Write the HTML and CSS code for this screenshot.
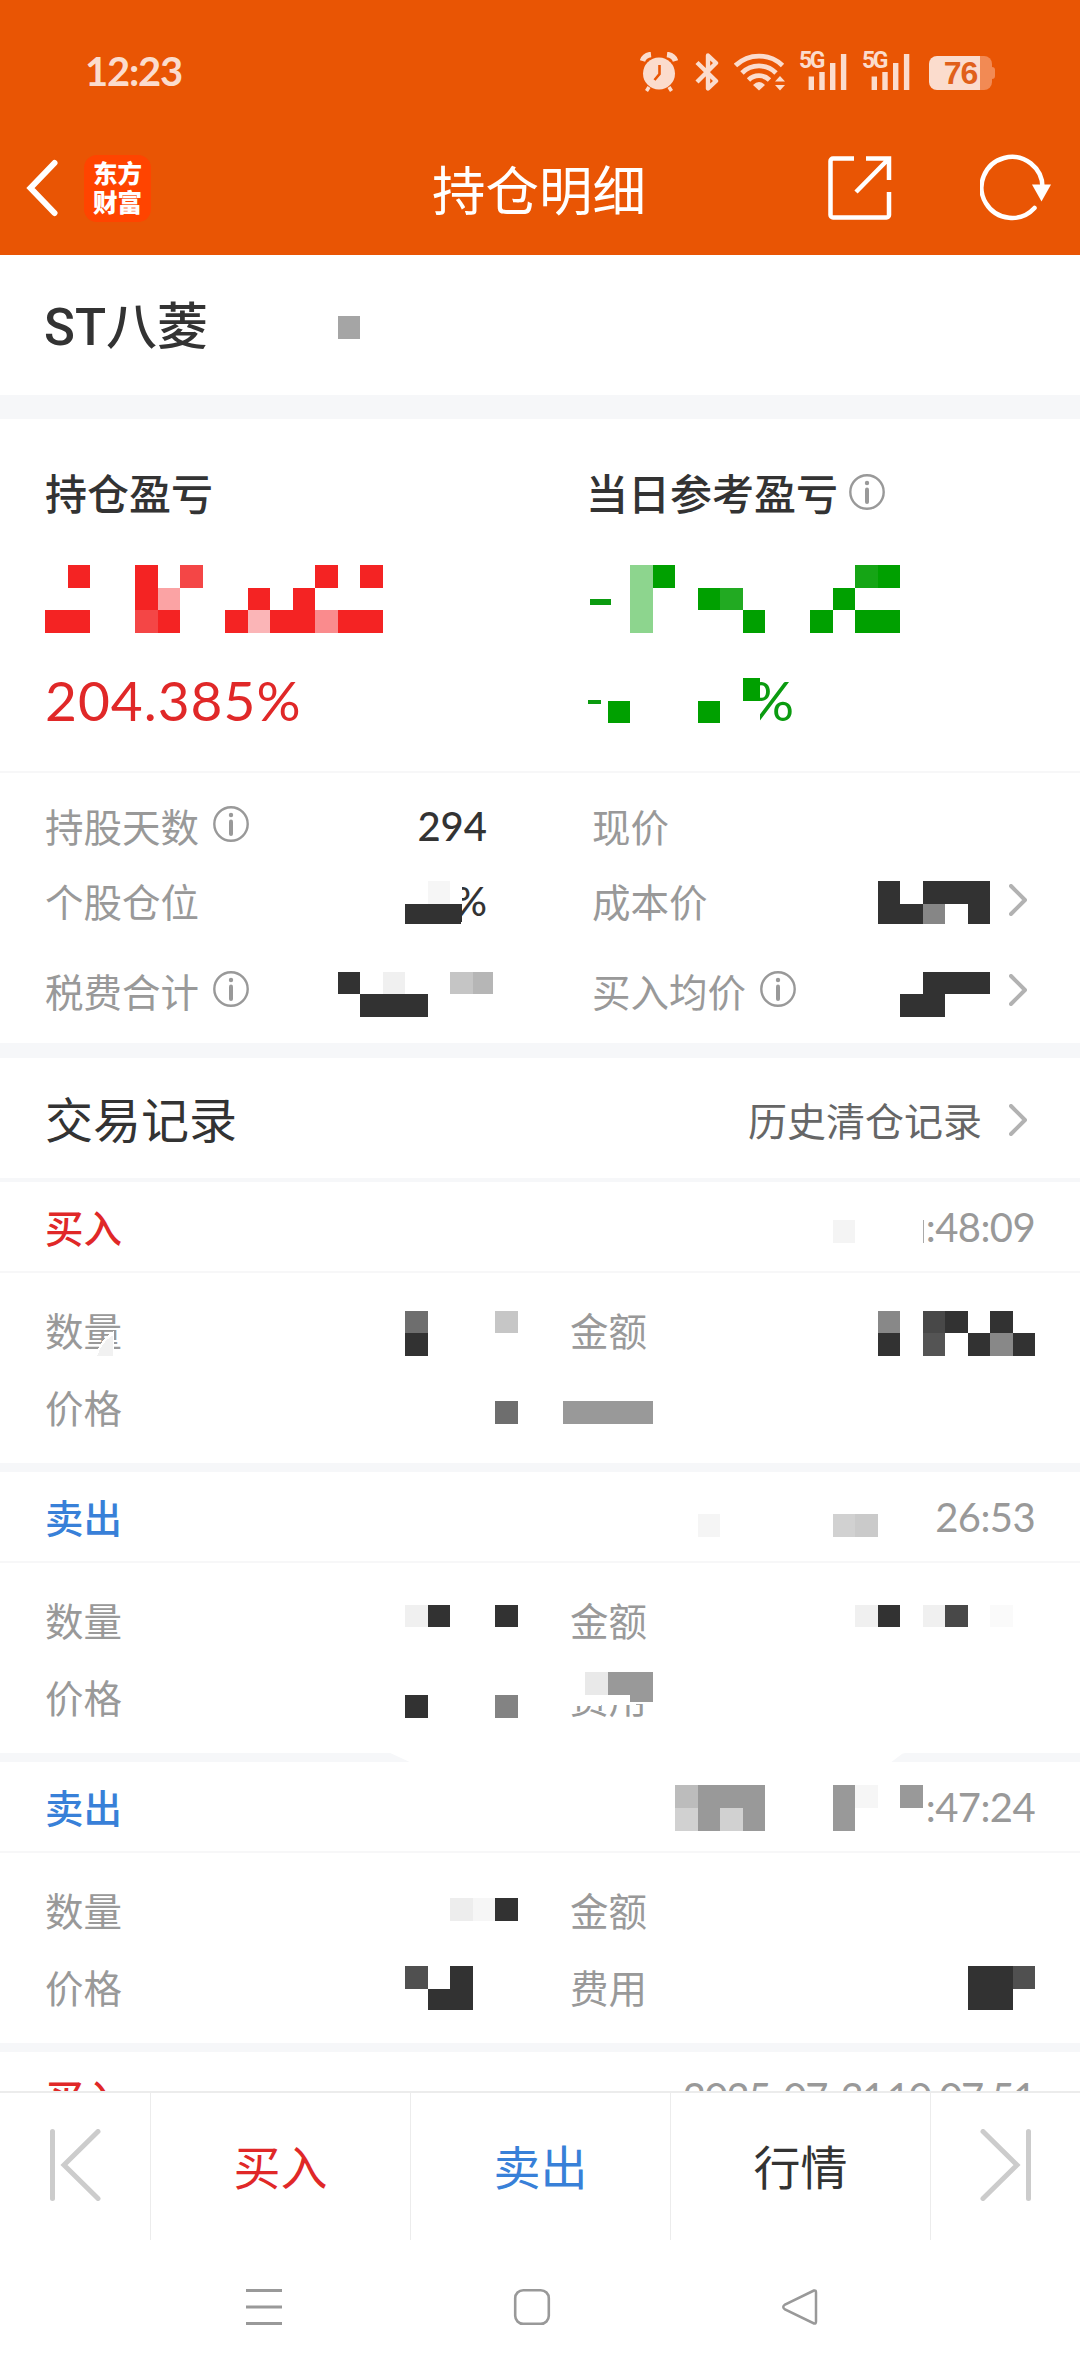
FILE: index.html
```html
<!DOCTYPE html>
<html lang="zh-CN">
<head>
    <meta charset="UTF-8">
    <meta name="viewport" content="width=device-width, initial-scale=1.0">
    <title>持仓明细</title>
    <link rel="stylesheet" href="styles.css">
</head>
<body>
    <!-- icons used more than once -->
    <svg class="defs" width="0" height="0">
        <symbol id="info" viewBox="0 0 36 36">
            <circle cx="18" cy="18" r="16.7" fill="none" stroke="#999" stroke-width="2.4"/>
            <circle cx="18" cy="9" r="2.2" fill="#999"/>
            <path d="M18 15.5v12.5" stroke="#999" stroke-width="4" stroke-linecap="round"/>
        </symbol>
        <symbol id="arrow" viewBox="0 0 18 32">
            <path d="M2 2l14 14L2 30" fill="none" stroke="#b2b2b2" stroke-width="4" stroke-linecap="round" stroke-linejoin="round"/>
        </symbol>
        <symbol id="signal" viewBox="0 0 50 40">
            <path d="M12.300 24.500v13.500M23 20v18M33.700 11v27M44.600 2v36" stroke="#fbdccd" stroke-width="5.400"/>
        </symbol>
    </svg>

    <header>
        <div class="status">
            <span class="time">12:23</span>
            <svg class="alarm" width="38" height="40" viewBox="0 0 38 40" fill="none" stroke="#fbdccd">
                <circle cx="19" cy="21.5" r="16" fill="#fbdccd" stroke="none"/>
                <path d="M2.500 9C3.500 5.500 6.500 3 11 2.500M35.500 9C34.500 5.500 31.500 3 27 2.500" stroke-width="5.500"/>
                <path d="M9 35l-2.500 4M29 35l2.500 4" stroke-width="3.500"/>
                <path d="M19.500 13v9l-5 6" stroke="#e95504" stroke-width="2.600"/>
            </svg>
            <svg class="bt" width="24" height="40" viewBox="0 0 24 40">
                <path d="M2 10.500L21 29l-8 7.500V3.500l8 7.500L2 30" fill="none" stroke="#fbdccd" stroke-width="4.400" stroke-linejoin="round"/>
            </svg>
            <svg class="wifi" width="52" height="40" viewBox="0 0 52 40" fill="none" stroke="#fbdccd" stroke-width="4.800">
                <path d="M1.500 13.500a34 34 0 0 1 47 0M8 21a24 24 0 0 1 34 0M14.500 28a15 15 0 0 1 21 0"/>
                <path d="M25 38.500l-6-5.500q6-6 12 0zM41 29.500l5-5.500 5 5.500zM41 33l5 5.500 5-5.500z" fill="#fbdccd" stroke="none"/>
            </svg>
            <span class="sim"><b>5G</b><svg width="50" height="40"><use href="#signal"/></svg></span>
            <span class="sim"><b>5G</b><svg width="50" height="40"><use href="#signal"/></svg></span>
            <span class="battery"><i>76</i></span>
        </div>
        <div class="titlebar">
            <svg class="back" width="32" height="60" viewBox="0 0 32 60">
                <path d="M28.500 5L4.500 30l24 25" fill="none" stroke="#fff" stroke-width="6" stroke-linecap="round"/>
            </svg>
            <div class="logo"><span>东方</span><span>财富</span></div>
            <h1>持仓明细</h1>
            <svg class="share" width="64" height="64" viewBox="0 0 64 64" fill="none" stroke="#fff" stroke-width="4.500">
                <path d="M26 2.500H5a2.500 2.500 0 0 0-2.500 2.500v54A2.500 2.500 0 0 0 5 61.500h53.500a2.500 2.500 0 0 0 2.500-2.500V36M38 2.500h23V24M61 2.500L28 36"/>
            </svg>
            <svg class="reload" width="74" height="68" viewBox="0 0 74 68">
                <path d="M62.500 34A30.500 30.500 0 1 0 54.500 54" fill="none" stroke="#fff" stroke-width="4.500" stroke-linecap="round"/>
                <path d="M52 30.500h19L61.500 47.500z" fill="#fff"/>
            </svg>
        </div>
    </header>

    <section class="stock">ST八菱</section>

    <section class="profit">
        <div>
            <h2>持仓盈亏</h2>
            <p class="amount"></p>
            <p class="rate red">204.385%</p>
        </div>
        <div>
            <h2>当日参考盈亏<svg class="info"><use href="#info"/></svg></h2>
            <p class="amount"><span class="minus"></span></p>
            <p class="rate green"><span class="dash"></span><span>%</span></p>
        </div>
    </section>

    <section class="detail">
        <div class="row">
            <label>持股天数<svg class="info"><use href="#info"/></svg></label><b>294</b>
            <label>现价</label>
        </div>
        <div class="row">
            <label>个股仓位</label><b>%</b>
            <label>成本价</label><svg class="arrow"><use href="#arrow"/></svg>
        </div>
        <div class="row last">
            <label>税费合计<svg class="info"><use href="#info"/></svg></label><b></b>
            <label>买入均价<svg class="info"><use href="#info"/></svg></label><svg class="arrow"><use href="#arrow"/></svg>
        </div>
    </section>

    <section class="history">
        <h3>交易记录</h3>
        <a>历史清仓记录</a>
        <svg class="arrow"><use href="#arrow"/></svg>
    </section>

    <main>
        <article>
            <div class="head"><strong class="red">买入</strong><time>:48:09</time></div>
            <div class="grid"><span>数量</span><span>金额</span><span>价格</span></div>
        </article>
        <article>
            <div class="head"><strong class="blue">卖出</strong><time>26:53</time></div>
            <div class="grid"><span>数量</span><span>金额</span><span>价格</span><span>费用</span></div>
        </article>
        <article>
            <div class="head"><strong class="blue">卖出</strong><time>:47:24</time></div>
            <div class="grid"><span>数量</span><span>金额</span><span>价格</span><span>费用</span></div>
        </article>
        <article>
            <div class="head"><strong class="red">买入</strong><time class="full">2025-07-31 10:07:51</time></div>
        </article>
    </main>

    <footer>
        <div class="tab side">
            <svg width="52" height="72" viewBox="0 0 52 72" fill="none" stroke="#ccc" stroke-width="5" stroke-linecap="round">
                <path d="M3.500 2.500v67M49 2.500L15 36l34 33.500"/>
            </svg>
        </div>
        <div class="tab red">买入</div>
        <div class="tab blue">卖出</div>
        <div class="tab">行情</div>
        <div class="tab side">
            <svg width="52" height="72" viewBox="0 0 52 72" fill="none" stroke="#ccc" stroke-width="5" stroke-linecap="round">
                <path d="M48.500 2.500v67M3 2.500L37 36 3 69.500"/>
            </svg>
        </div>
    </footer>

    <nav>
        <svg width="38" height="38" viewBox="0 0 38 38"><path d="M1 2.500h36M1 19h36M1 35.500h36" stroke="#999" stroke-width="3"/></svg>
        <svg width="38" height="38" viewBox="0 0 38 38"><rect x="2.200" y="2.200" width="33.600" height="33.600" rx="8" fill="none" stroke="#999" stroke-width="2.600"/></svg>
        <svg width="38" height="38" viewBox="0 0 38 38"><path d="M33 2.500L4 16.500q-3.500 2.500 0 5L33 35.500q2 .5 2-2v-29q0-2.500-2-2z" fill="none" stroke="#999" stroke-width="2.500"/></svg>
    </nav>

    <!-- mosaic over the private numbers, one unit = one block -->
    <svg class="mosaic" viewBox="0 0 48 105" preserveAspectRatio="none" shape-rendering="crispEdges">
        <path fill="#a5a5a5" d="M15 14h1v1h-1z"/>

        <g fill="#f42323">
            <path d="M3 25h1v1h-1zM2 27h2v1h-2zM6 25h1v2h-1zM7 27h1v1h-1zM14 25h1v1h-1zM16 25h1v1h-1zM11 26h1v1h-1zM13 26h1v1h-1zM10 27h1v1h-1zM12 27h2v1h-2zM15 27h2v1h-2z"/>
            <path fill="#f44646" d="M8 25h1v1h-1zM6 27h1v1h-1z"/>
            <path fill="#fba3a4" d="M7 26h1v1h-1z"/>
            <path fill="#fbb5b7" d="M11 27h1v1h-1z"/>
            <path fill="#fa8b8d" d="M14 27h1v1h-1z"/>
        </g>

        <path fill="#fff" d="M32.900 29.700h.88v2.500h-.88z"/>
        <g fill="#00a000">
            <path fill="#8dd58e" d="M28 25h1v3h-1z"/>
            <path d="M29 25h1v1h-1zM31 26h1v1h-1zM33 27h1v1h-1zM39 25h1v1h-1zM37 26h1v1h-1zM36 27h1v1h-1zM38 27h2v1h-2z"/>
            <path fill="#22aa22" d="M32 26h1v1h-1z"/>
            <path fill="#15a515" d="M38 25h1v1h-1z"/>
            <path d="M27 31h1v1h-1zM31 31h1v1h-1zM33 30h.78v1h-.78z"/>
        </g>

        <path fill="#fff" d="M19 39h1.550v2h-1.550z"/>
        <g fill="#323232">
            <path fill="#f6f6f6" d="M19 39h1v1h-1z"/>
            <path d="M18 40h2.550v.7l-.1 .2H18z"/>
            <path d="M39 39h1v1h1v.9h-2zM41 39h3v1.900h-1v-.9h-2z"/>
            <path fill="#868686" d="M41 40h1v.9h-1z"/>
            <path d="M15 43h1v1h-1zM16 44h3v1h-3zM41 43h3v1h-3zM40 44h2v1h-2z"/>
            <path fill="#f0f0f0" d="M17 43h1v1h-1z"/>
            <path fill="#c5c5c5" d="M20 43h1v1h-1z"/>
            <path fill="#b6b6b6" d="M21 43h.9v1h-.9z"/>
        </g>

        <g fill="#323232">
            <path fill="#f4f4f4" d="M37 54h1v1h-1z"/>
            <path fill="#aaa" d="M41 54h.07v1h-.07z"/>
            <path fill="#fff" d="M5.050 58.900q-.6 .35-.8 1.100H5.050z"/>
            <path fill="#f1f1f1" d="M5 59.100q-.5 .3-.68 .9H5z"/>
            <path d="M18 59h1v1h-1zM39 59h1v1h-1zM42 58h1v1h-1zM44 58h1v1h-1zM43 59h1v1h-1zM45 59h1v1h-1z"/>
            <path fill="#6e6e6e" d="M18 58h1v1h-1zM22 62h1v1h-1z"/>
            <path fill="#c6c6c6" d="M22 58h1v1h-1z"/>
            <path fill="#888" d="M39 58h1v1h-1zM44 59h1v1h-1z"/>
            <path fill="#484848" d="M41 58h1v1h-1z"/>
            <path fill="#545454" d="M41 59h1v1h-1z"/>
            <path fill="#999" d="M25 62h4v1h-4z"/>
        </g>

        <g fill="#323232">
            <path fill="#f5f5f5" d="M31 67h1v1h-1z"/>
            <path fill="#d1d1d1" d="M37 67h1v1h-1z"/>
            <path fill="#cacaca" d="M38 67h1v1h-1z"/>
            <path d="M19 71h1v1h-1zM22 71h1v1h-1zM39 71h1v1h-1zM18 75h1v1h-1z"/>
            <path fill="#f0f0f0" d="M18 71h1v1h-1zM38 71h1v1h-1zM41 71h1v1h-1z"/>
            <path fill="#484848" d="M42 71h1v1h-1z"/>
            <path fill="#fafafa" d="M44 71h1v1h-1z"/>
            <path fill="#838383" d="M22 75h1v1h-1z"/>
            <path fill="#fff" d="M25 73.900h4v1.500l-3.500 .1H25z"/>
            <path fill="#e9e9e9" d="M26 74h1v1h-1z"/>
            <path fill="#999" d="M27 74h2v1.300h-1v-.3h-1z"/>
            <path fill="#fff" shape-rendering="auto" d="M17.200 77.500L18.400 78.050H39.500L40.100 77.600l.6-.15z"/>
        </g>

        <g fill="#999">
            <path fill="#bcbcbc" d="M30 79h1v1h-1z"/>
            <path fill="#d1d1d1" d="M30 80h1v1h-1z"/>
            <path d="M31 79h3v2h-1v-1h-1v1h-1zM37 79h1v2h-1zM40 79h1v1h-1z"/>
            <path fill="#d1d1d1" d="M32 80h1v1h-1z"/>
            <path fill="#f6f6f6" d="M38 79h1v1h-1zM21 84h1v1h-1z"/>
            <path fill="#ededed" d="M20 84h1v1h-1z"/>
            <path fill="#323232" d="M22 84h1v1h-1zM20 87h1v1.950h-2v-.95h1zM43 87h2v1.950h-2z"/>
            <path fill="#505050" d="M18 87h1v1h-1zM45 87h1v1h-1z"/>
        </g>
    </svg>
</body>
</html>
```
FILE: styles.css
```css
* { box-sizing: border-box; margin: 0; padding: 0; }
body { position: relative; width: 1080px; height: 2373px; overflow: hidden; display: flex; flex-direction: column; background: #fff; color: #333; font-family: Lato, "Noto Sans CJK SC", sans-serif; }
.defs { position: absolute; }
.red { color: #e02828; }
.green { color: #0b9b10; }
.blue { color: #3880d8; }
.info { width: 36px; height: 36px; }
.arrow { width: 18px; height: 32px; }

header { height: 255px; background: #e95504; color: #fff; }
.status { display: flex; align-items: center; height: 144px; padding: 0 85px 0 85px; color: #fbdccd; }
.time { flex: 1; font-size: 40px; font-weight: 700; letter-spacing: -1.2px; margin-top: -2px; }
.bt { margin-left: 17px; }
.wifi { margin-left: 15px; }
.sim { position: relative; width: 50px; height: 40px; margin-left: 13px; }
.sim b { position: absolute; left: 0; top: -3px; font: 700 23px/23px Roboto, sans-serif; letter-spacing: -2.5px; }
.sim svg { display: block; }
.battery { position: relative; width: 63px; height: 34px; margin: 2px 3px 0 14px; border-radius: 8px; background: linear-gradient(90deg, #fbdccd 51px, #f28a54 51px); text-align: center; }
.battery::after { content: ""; position: absolute; right: -3px; top: 11px; width: 3px; height: 12px; border-radius: 0 3px 3px 0; background: #f28a54; }
.battery i { color: #e0601a; font: 700 32px/35px "Liberation Sans", sans-serif; letter-spacing: -1px; }
.sim + .battery { margin-left: 17px; }
.titlebar { display: flex; align-items: center; height: 88px; padding: 0 26px 0 26px; }
.logo { display: flex; flex-direction: column; width: 67px; height: 67px; margin-left: 26px; padding-top: 3px; border-radius: 13px; background: #ff4400; font: 900 24.500px/29px "Noto Sans CJK SC", sans-serif; text-align: center; }
h1 { width: 216px; margin-left: 281px; font-size: 53.500px; font-weight: 400; line-height: 88px; white-space: nowrap; padding-top: 4px; }
.share { margin-left: 180px; }
.reload { margin-left: 88px; }

.stock { height: 140px; padding-left: 44px; font: 500 51px/146px Roboto, "Noto Sans CJK SC", sans-serif; }

.profit { display: flex; height: 378px; padding-left: 45px; border-top: 24px solid #f6f7f9; border-bottom: 2px solid #f7f7f8; }
.profit > div { flex: none; width: 541px; padding-top: 41px; }
h2 { display: flex; align-items: center; height: 62px; font-size: 42px; font-weight: 500; }
h2 .info { margin: 2px 0 0 11px; }
.amount { height: 124px; padding-top: 77px; }
.minus { display: block; width: 21px; height: 6px; margin-left: 4px; background: #0b9b10; }
.rate { display: flex; align-items: center; height: 108px; font-size: 55px; letter-spacing: 1px; }
.dash { width: 13px; height: 4px; margin: 4px 149px 0 2px; background: #0b9b10; }

.detail { height: 285px; padding-top: 14px; border-bottom: 15px solid #f6f7f9; }
.row { display: grid; grid-template-columns: 240px 247px 60px 1fr 18px; align-items: center; height: 75px; padding-right: 53px; color: #999; font-size: 38.500px; }
.row.last { height: 105px; }
.row label { display: flex; align-items: center; padding-left: 45px; white-space: nowrap; }
.row label:nth-of-type(2) { grid-column: 4; padding-left: 45px; }
.row label .info { margin: -2px 0 0 14px; flex: none; }
.row b { padding-top: 3px; color: #333; font-size: 40px; font-weight: 500; text-align: right; }

.history { display: flex; align-items: center; height: 124px; padding: 0 53px 0 45px; border-bottom: 4px solid #f6f7f9; }
h3 { flex: 1; margin-top: -3px; font-size: 48px; font-weight: 400; }
.history a { margin-right: 27px; color: #666; font-size: 39px; padding-top: 2px; }
.history .arrow { margin-top: 3px; }

main { height: 909px; overflow: hidden; }
article { height: 290px; border-bottom: 9px solid #f6f7f9; }
.head { display: flex; justify-content: space-between; align-items: center; height: 91px; padding: 0 45px; border-bottom: 2px solid #f7f7f8; font-size: 38.500px; }
.head strong { margin-top: -2px; font-weight: 500; }
time { color: #999; font-size: 40px; letter-spacing: -.6px; }
.full { letter-spacing: -1.4px; word-spacing: -6px; }
.grid { display: grid; grid-template-columns: 525px 1fr; padding: 20px 0 0 45px; color: #999; font-size: 38.500px; line-height: 77px; }

footer { display: flex; height: 149px; border-top: 2px solid #ececec; }
.tab { flex: 1; border-left: 1px solid #ececec; font-size: 47px; line-height: 149px; text-align: center; }
.tab.side { flex: none; width: 150px; padding-top: 36px; line-height: 0; }
.tab.side:first-child { border-left: 0; }

nav { display: flex; gap: 230px; height: 133px; padding: 48px 0 0 245px; }

.mosaic { position: absolute; left: 0; top: 0; width: 1080px; height: 2373px; pointer-events: none; }
```
